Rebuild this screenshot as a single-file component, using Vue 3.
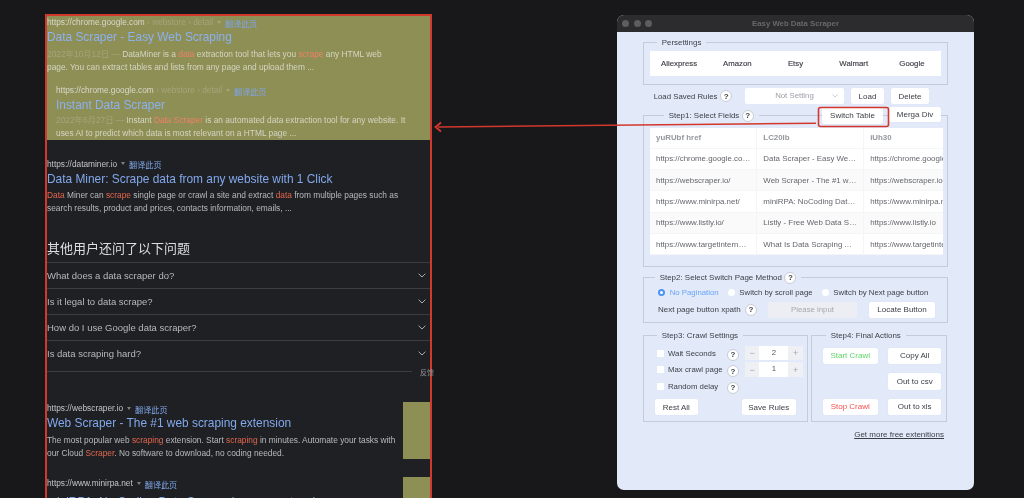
<script setup>
// 左側の検索結果
const faqs = [
  'What does a data scraper do?',
  'Is it legal to data scrape?',
  'How do I use Google data scraper?',
  'Is data scraping hard?',
]

// 上部のプリセット
const presets = ['Aliexpress', 'Amazon', 'Etsy', 'Walmart', 'Google']

// テーブルのデータ
const columns = ['yuRUbf href', 'LC20lb', 'iUh30']
const rows = [
  ['https://chrome.google.com/webstore', 'Data Scraper - Easy Web Scraping', 'https://chrome.google.com'],
  ['https://webscraper.io/', 'Web Scraper - The #1 web scraping', 'https://webscraper.io'],
  ['https://www.minirpa.net/', 'miniRPA: NoCoding Data Scraper', 'https://www.minirpa.net'],
  ['https://www.listly.io/', 'Listly - Free Web Data Scraper', 'https://www.listly.io'],
  ['https://www.targetinternet.com/', 'What Is Data Scraping And How', 'https://www.targetinternet.com'],
]

const crawlOptions = [
  { label: 'Wait Seconds', value: 2 },
  { label: 'Max crawl page', value: 1 },
  { label: 'Random delay', value: null },
]
</script>

<template>
  <div class="page">
    <section class="serp">
      <div class="hl">
        <div class="res">
          <div class="url">https://chrome.google.com<span class="crumb"> › webstore › detail</span><i class="tri"></i><span class="tr">翻译此页</span></div>
          <div class="ttl">Data Scraper - Easy Web Scraping</div>
          <p class="snip"><span class="crumb">2022年10月12日 — </span>DataMiner is a <em>data</em> extraction tool that lets you <em>scrape</em> any HTML web<br>page. You can extract tables and lists from any page and upload them ...</p>
        </div>
        <div class="res sub">
          <div class="url">https://chrome.google.com<span class="crumb"> › webstore › detail</span><i class="tri"></i><span class="tr">翻译此页</span></div>
          <div class="ttl tight">Instant Data Scraper</div>
          <p class="snip"><span class="crumb">2022年6月27日 — </span>Instant <em>Data Scraper</em> is an automated data extraction tool for any website. It<br>uses AI to predict which data is most relevant on a HTML page ...</p>
        </div>
      </div>

      <div class="res third">
        <div class="url">https://dataminer.io<i class="tri"></i><span class="tr">翻译此页</span></div>
        <div class="ttl">Data Miner: Scrape data from any website with 1 Click</div>
        <p class="snip"><em>Data</em> Miner can <em>scrape</em> single page or crawl a site and extract <em>data</em> from multiple pages such as<br>search results, product and prices, contacts information, emails, ...</p>
      </div>

      <h2 class="faq-head">其他用户还问了以下问题</h2>
      <div class="faq">
        <div v-for="q in faqs" :key="q" class="faq-row">
          <span>{{ q }}</span>
          <svg width="8" height="5" viewBox="0 0 8 5"><path d="M.6.7 4 4 7.4.7" fill="none" stroke="#a9adb2" stroke-width="1"/></svg>
        </div>
      </div>
      <div class="feedback"><span class="fb-line"></span><span class="fb-text">反馈</span></div>

      <div class="thumbed first">
        <div class="res grow">
          <div class="url">https://webscraper.io<i class="tri"></i><span class="tr">翻译此页</span></div>
          <div class="ttl">Web Scraper - The #1 web scraping extension</div>
          <p class="snip">The most popular web <em>scraping</em> extension. Start <em>scraping</em> in minutes. Automate your tasks with<br>our Cloud <em>Scraper</em>. No software to download, no coding needed.</p>
        </div>
        <div class="thumb"></div>
      </div>
      <div class="thumbed second">
        <div class="res grow">
          <div class="url">https://www.minirpa.net<i class="tri"></i><span class="tr">翻译此页</span></div>
          <div class="ttl">miniRPA: No Coding Data Scraper browser extension</div>
        </div>
        <div class="thumb"></div>
      </div>
    </section>

    <section class="win">
      <header class="bar">
        <i class="dot"></i><i class="dot"></i><i class="dot"></i>
        <span class="bar-title">Easy Web Data Scraper</span>
      </header>
      <div class="win-body">
        <div class="box preset-box">
          <div class="box-title"><span class="legend l-preset">Persettings</span></div>
          <div class="presets">
            <span v-for="p in presets" :key="p">{{ p }}</span>
          </div>
        </div>

        <div class="load-row">
          <span class="load-label">Load Saved Rules</span>
          <span class="help">?</span>
          <div class="select">Not Setting
            <svg width="6" height="4" viewBox="0 0 6 4"><path d="M.5.5 3 3 5.500.5" fill="none" stroke="#c0c4cc" stroke-width=".8"/></svg>
          </div>
          <button class="btn load">Load</button>
          <button class="btn delete">Delete</button>
        </div>

        <div class="box step1">
          <div class="box-title tall">
            <span class="legend s1">Step1: Select Fields <span class="help">?</span></span>
            <button class="btn switch">Switch Table</button>
            <button class="btn merge">Merga Div</button>
          </div>
          <div class="table-wrap">
            <table>
              <thead>
                <tr><th v-for="c in columns" :key="c">{{ c }}</th></tr>
              </thead>
              <tbody>
                <tr v-for="(r, i) in rows" :key="i">
                  <td v-for="(c, j) in r" :key="j" :class="{ clip: j === 2 }">{{ c }}</td>
                </tr>
              </tbody>
            </table>
          </div>
        </div>

        <div class="box step2">
          <div class="box-title"><span class="legend s2">Step2: Select Switch Page Method <span class="help">?</span></span></div>
          <div class="radios">
            <span class="radio on"><i></i>No Pagination</span>
            <span class="radio"><i></i>Switch by scroll page</span>
            <span class="radio"><i></i>Switch by Next page button</span>
          </div>
          <div class="xpath">
            <span class="xpath-label">Next page button xpath</span>
            <span class="help">?</span>
            <div class="input">Please input</div>
            <button class="btn locate">Locate Button</button>
          </div>
        </div>

        <div class="split">
          <div class="box step3">
            <div class="box-title"><span class="legend l-step3">Step3: Crawl Settings</span></div>
            <div class="opts">
              <div v-for="o in crawlOptions" :key="o.label" class="opt">
                <i class="check"></i>
                <span class="opt-label">{{ o.label }}</span>
                <span class="help low">?</span>
                <div v-if="o.value !== null" class="stepper">
                  <span class="sbtn">−</span><span class="sval">{{ o.value }}</span><span class="sbtn">+</span>
                </div>
              </div>
            </div>
            <div class="step3-actions">
              <button class="btn rest">Rest All</button>
              <button class="btn save">Save Rules</button>
            </div>
          </div>
          <div class="box step4">
            <div class="box-title"><span class="legend l-step4">Step4: Final Actions</span></div>
            <div class="act-row first-act">
              <button class="btn a-left green">Start Crawl</button>
              <button class="btn a-right">Copy All</button>
            </div>
            <div class="act-row csv">
              <button class="btn a-right tall-btn">Out to csv</button>
            </div>
            <div class="act-row xls">
              <button class="btn a-left red">Stop Crawl</button>
              <button class="btn a-right">Out to xls</button>
            </div>
          </div>
        </div>

        <a class="more">Get more free extenitions</a>
      </div>
    </section>

    <!-- 注釈の赤枠と矢印 -->
    <svg class="marks" width="1024" height="498" viewBox="0 0 1024 498">
      <rect x="818.500" y="107.500" width="70" height="19" rx="2" fill="none" stroke="#d3372e" stroke-width="1.600"/>
      <path d="M816 123.300 438 127" fill="none" stroke="#d3372e" stroke-width="1.500"/>
      <path d="M441 122.500 435.500 127 441 131.500" fill="none" stroke="#d3372e" stroke-width="1.800"/>
    </svg>
  </div>
</template>

<style>
html, body { background: #18181a; }
</style>

<style scoped>
.page {
  position: relative;
  display: flex;
  align-items: flex-start;
  width: 1024px;
  height: 498px;
  overflow: hidden;
  background: #18181a;
  font-family: "Liberation Sans", "Noto Sans CJK SC", sans-serif;
  filter: blur(0.4px);
}

/* 左：検索結果のスクリーンショット */
.serp {
  box-sizing: border-box;
  flex: none;
  width: 387px;
  height: 520px;
  margin: 14px 0 0 45px;
  border: 2px solid #d0392e;
  border-bottom: 0;
  background: #1f2023;
  color: #b6b9be;
}
.hl {
  height: 123.500px;
  background: #8e8f55;
  color: #d4d5c3;
}
.res { white-space: nowrap; }
.sub { margin: 10.500px 0 0 9px; }
.third { margin-top: 18px; }
.url {
  display: flex;
  align-items: center;
  height: 12px;
  font-size: 8.300px;
  color: #c4c5c6;
}
.hl .url { color: #d8d9cb; }
.crumb { color: #a4a57c; white-space: pre; }
.tri {
  width: 0;
  height: 0;
  margin: 0 4px;
  border: 2.500px solid transparent;
  border-top: 3px solid #7f8084;
  border-bottom: 0;
}
.hl .tri { border-top-color: #a4a57c; }
.tr {
  margin-top: 2px;
  font-size: 8.100px;
  color: #7fa5e8;
}
.ttl {
  height: 19.500px;
  font-size: 11.900px;
  line-height: 19.500px;
  color: #82a8ec;
}
.ttl.tight { height: 17.500px; line-height: 19px; }
.hl .ttl { color: #8cb1f0; }
.snip {
  margin: 0;
  font-size: 8.350px;
  line-height: 13px;
}
.snip em { font-style: normal; color: #e2674f; }
.hl .snip em { color: #ec8266; }
.faq-head {
  height: 20px;
  margin: 23.700px 0 3px;
  font-size: 13px;
  font-weight: 400;
  line-height: 20px;
  color: #dcdde0;
}
.faq { border-top: 1.500px solid #3b3d40; }
.faq-row {
  display: flex;
  align-items: center;
  justify-content: space-between;
  height: 25px;
  padding-right: 4px;
  border-bottom: 1px solid #3b3d40;
  font-size: 9.500px;
}
.faq-row:last-child { border-bottom: 0; height: 26px; }
.feedback {
  display: flex;
  align-items: center;
  height: 10px;
}
.fb-line { flex: 0 0 365px; height: 1px; background: #3b3d40; }
.fb-text {
  margin-left: 8px;
  font-size: 7px;
  color: #93969b;
  white-space: nowrap;
}
.thumbed { display: flex; justify-content: space-between; }
.first { margin-top: 25.500px; height: 57.500px; }
.second { margin-top: 17.500px; }
.second .ttl { margin-top: 3.500px; }
.grow { flex: 1; min-width: 0; }
.thumb { flex: 0 0 27px; height: 57px; background: #8e8f55; }

/* 右：拡張機能のウィンドウ */
.win {
  flex: none;
  width: 357px;
  height: 475px;
  margin: 15px 0 0 185px;
  border-radius: 7px;
  overflow: hidden;
  background: #e2eafa;
  color: #3b3e45;
  font-size: 7.800px;
}
.bar {
  position: relative;
  display: flex;
  align-items: center;
  gap: 4.700px;
  height: 17px;
  padding-left: 5px;
  background: #2c2c2e;
}
.dot { width: 7px; height: 7px; border-radius: 50%; background: #5d5d60; }
.bar-title {
  position: absolute;
  left: 0;
  right: 0;
  text-align: center;
  font-size: 7.800px;
  font-weight: 700;
  color: #68686b;
}
.win-body { padding: 9.500px 26px 0; }
.box {
  box-sizing: border-box;
  border: 1px solid #c4cbdb;
}
.box-title {
  display: flex;
  align-items: center;
  height: 12px;
  margin-top: -6.500px;
}
.box-title.tall { height: 18px; margin-top: -9px; }
.legend {
  display: inline-flex;
  align-items: center;
  gap: 2.500px;
  padding: 0 5px;
  background: #e2eafa;
  font-size: 7.950px;
  white-space: nowrap;
}
.l-preset { margin-left: 6.700px; }
.l-step3 { margin-left: 12.700px; }
.l-step4 { margin-left: 13.700px; }
.s1 { flex: none; margin-left: 13.700px; }
.s2 { margin-left: 10.700px; }
.help {
  box-sizing: border-box;
  display: inline-flex;
  flex: none;
  align-items: center;
  justify-content: center;
  width: 12px;
  height: 12px;
  border: 1px solid #c8ccd5;
  border-radius: 50%;
  background: #fff;
  color: #3b3e45;
  font-size: 8px;
  font-weight: 700;
}
.btn {
  box-sizing: border-box;
  flex: none;
  height: 16px;
  padding: 0;
  border: 0;
  border-radius: 2px;
  background: #fff;
  box-shadow: 0 0 1px rgba(60, 70, 90, 0.12);
  color: #3b3e45;
  font-family: inherit;
  font-size: 8px;
}

.preset-box { height: 43.500px; padding: 0 6px; }
.presets {
  display: flex;
  align-items: center;
  height: 24.500px;
  margin-top: 3px;
  background: #fff;
}
.presets span { flex: 1; text-align: center; -webkit-text-stroke: 0.15px #3b3e45; }

.load-row {
  display: flex;
  align-items: center;
  height: 16px;
  margin: 3px 0 0;
  padding-left: 10.700px;
}
.load-label { width: 66.500px; white-space: nowrap; }
.select {
  position: relative;
  box-sizing: border-box;
  width: 99.500px;
  height: 15.500px;
  margin-left: 12.500px;
  background: #fff;
  border-radius: 2px;
  color: #9a9ea6;
  line-height: 15px;
  text-align: center;
}
.select svg { position: absolute; top: 6px; right: 6px; }
.load { width: 33.500px; margin-left: 6.500px; }
.delete { width: 38.500px; margin-left: 6.500px; }

.step1 { height: 152px; margin-top: 10.500px; padding: 0 6px; }
.switch { width: 61px; height: 17.500px; margin-left: auto; }
.merge { width: 52px; height: 15.500px; margin: -2px 0 0 6px; }
.table-wrap { width: 293px; margin-top: 3px; overflow: hidden; background: #fff; }
table {
  width: 321px;
  border-collapse: collapse;
  table-layout: fixed;
  font-size: 7.900px;
  color: #64676d;
}
th, td {
  box-sizing: border-box;
  height: 21.400px;
  padding: 0 6px;
  border-right: 1px solid #f4f5f6;
  border-bottom: 1px solid #f4f5f6;
  overflow: hidden;
  text-align: left;
  text-overflow: ellipsis;
  white-space: nowrap;
}
th { height: 20.500px; color: #94979d; font-weight: 700; }
td.clip { text-overflow: clip; }
tbody tr:nth-child(even) td { background: #fafafa; }

.step2 { height: 46px; margin-top: 10.500px; }
.radios {
  display: flex;
  align-items: center;
  gap: 9px;
  height: 13px;
  margin-top: 2.500px;
  padding-left: 14px;
}
.radio { display: inline-flex; align-items: center; gap: 4.700px; white-space: nowrap; }
.radio i {
  box-sizing: border-box;
  width: 7px;
  height: 7px;
  border-radius: 50%;
  background: #fff;
}
.radio.on { color: #6aa5f5; }
.radio.on i { border: 2px solid #4a94f5; }
.xpath {
  display: flex;
  align-items: center;
  height: 15.500px;
  margin-top: 3px;
  padding-left: 14px;
}
.xpath-label { width: 87px; font-size: 8px; white-space: nowrap; }
.input {
  width: 89px;
  height: 15.500px;
  margin-left: 11px;
  border-radius: 2px;
  background: #eceef3;
  color: #a5a8ae;
  line-height: 15px;
  text-align: center;
}
.locate { width: 66px; height: 15.500px; margin-left: 12px; }

.split { display: flex; gap: 3px; margin-top: 11.500px; }
.step3 { flex: 0 0 165px; height: 87px; }
.step4 { flex: 0 0 136px; height: 87px; }
.opts { margin-top: 4.500px; padding-left: 12.700px; }
.opt {
  display: flex;
  align-items: center;
  height: 15px;
  margin-bottom: 1.700px;
}
.check {
  flex: none;
  width: 7px;
  height: 7px;
  margin-right: 4.300px;
  background: #fff;
  border-radius: 1px;
}
.opt-label { width: 59px; white-space: nowrap; }
.low { margin-top: 3px; }
.stepper {
  display: flex;
  align-items: center;
  width: 58px;
  height: 14.500px;
  margin-left: 6px;
  background: #eef0f4;
  color: #a3a6ad;
}
.sbtn { flex: 1; text-align: center; font-size: 9px; }
.sval {
  flex: 0 0 29px;
  height: 100%;
  background: #fff;
  color: #55585f;
  line-height: 14.500px;
  text-align: center;
}
.step3-actions {
  display: flex;
  justify-content: space-between;
  margin-top: 5.500px;
  padding: 0 11px;
}
.rest { width: 42.500px; }
.save { width: 54.500px; }

.act-row { display: flex; justify-content: space-between; padding: 0 5px 0 10.700px; }
.first-act { margin-top: 6.500px; }
.csv { justify-content: flex-end; margin-top: 9.500px; }
.xls { margin-top: 9px; }
.a-left { width: 55px; }
.a-right { width: 52.600px; }
.tall-btn { height: 16.500px; }
.green { color: #5fd66a; }
.red { color: #f2514f; }
.more {
  display: block;
  margin-top: 8px;
  padding-right: 4px;
  color: #3b3e45;
  font-size: 8px;
  text-align: right;
  text-decoration: underline;
}

.marks { position: absolute; top: 0; left: 0; pointer-events: none; }
</style>
